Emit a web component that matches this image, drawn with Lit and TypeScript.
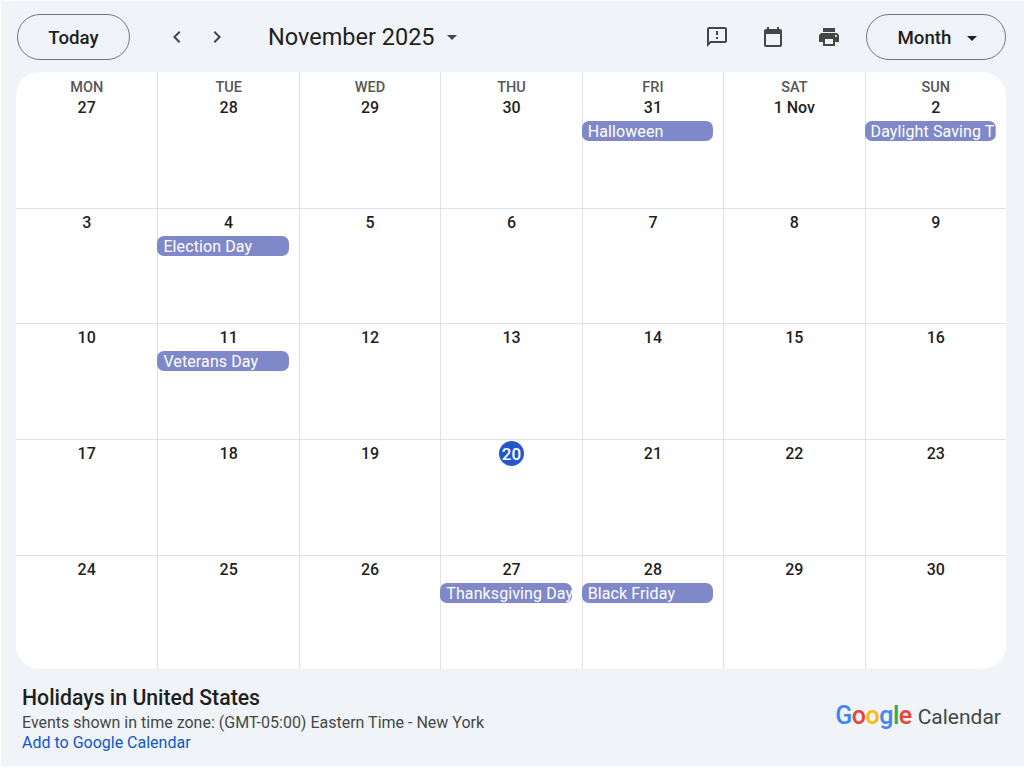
import { LitElement, html, css, svg } from 'lit';
import { customElement } from 'lit/decorators.js';

interface Day {
  label: string;
  event?: string;
  today?: boolean;
}

const WEEKDAYS = ['MON', 'TUE', 'WED', 'THU', 'FRI', 'SAT', 'SUN'];

const DAYS: Day[] = [
  { label: '27' }, { label: '28' }, { label: '29' }, { label: '30' },
  { label: '31', event: 'Halloween' }, { label: '1 Nov' }, { label: '2', event: 'Daylight Saving Time ends' },
  { label: '3' }, { label: '4', event: 'Election Day' }, { label: '5' }, { label: '6' },
  { label: '7' }, { label: '8' }, { label: '9' },
  { label: '10' }, { label: '11', event: 'Veterans Day' }, { label: '12' }, { label: '13' },
  { label: '14' }, { label: '15' }, { label: '16' },
  { label: '17' }, { label: '18' }, { label: '19' }, { label: '20', today: true },
  { label: '21' }, { label: '22' }, { label: '23' },
  { label: '24' }, { label: '25' }, { label: '26' }, { label: '27', event: 'Thanksgiving Day' },
  { label: '28', event: 'Black Friday' }, { label: '29' }, { label: '30' },
];

const ICONS = {
  left: 'M15.41 7.41L14 6l-6 6 6 6 1.41-1.41L10.83 12z',
  right: 'M10 6L8.59 7.41 13.17 12l-4.58 4.58L10 18l6-6z',
  caret: 'M7 10l5 5 5-5z',
  feedback: 'M20 2H4c-1.1 0-2 .9-2 2v18l4-4h14c1.1 0 2-.9 2-2V4c0-1.1-.9-2-2-2zm0 14H5.17L4 17.17V4h16v12zM11 12h2v2h-2zm0-6h2v4h-2z',
  calendar: 'M19 4h-1V2h-2v2H8V2H6v2H5c-1.1 0-2 .9-2 2v14c0 1.1.9 2 2 2h14c1.1 0 2-.9 2-2V6c0-1.1-.9-2-2-2zm0 16H5V9h14v11z',
  print: 'M19 8H5c-1.66 0-3 1.34-3 3v6h4v4h12v-4h4v-6c0-1.66-1.34-3-3-3zm-3 11H8v-5h8v5zm3-7c-.55 0-1-.45-1-1s.45-1 1-1 1 .45 1 1-.45 1-1 1zm-1-9H6v4h12V3z',
};

const icon = (d: string) => html`<svg viewBox="0 0 24 24" aria-hidden="true">${svg`<path d=${d}></path>`}</svg>`;

@customElement('app-root')
export class AppRoot extends LitElement {
  static styles = css`
    :host {
      display: block;
      width: 1024px;
      height: 770px;
      background: #fff;
      font-family: Roboto, 'Liberation Sans', sans-serif;
      color: #1f1f1f;
    }
    .panel {
      box-sizing: border-box;
      height: 765px;
      margin: 1px 0 0 1px;
      background: #f0f4f9;
      padding: 13px 18px 0 15px;
      display: flex;
      flex-direction: column;
    }
    .toolbar {
      display: flex;
      align-items: center;
      height: 46px;
      margin-bottom: 12px;
      padding-left: 1px;
    }
    .pill {
      box-sizing: border-box;
      height: 46px;
      border: 1px solid #747775;
      border-radius: 23px;
      display: flex;
      align-items: center;
      justify-content: center;
      padding-top: 1px;
      font-size: 18.7px;
      font-weight: 500;
    }
    .today { width: 113px; }
    .month { width: 140px; gap: 9px; padding-left: 10px; }
    .month svg { width: 24px; height: 24px; fill: #1f1f1f; }
    .nav {
      display: flex;
      gap: 16px;
      margin-left: 35px;
    }
    .nav svg, .tools svg, .caret { width: 24px; height: 24px; fill: #444746; display: block; }
    .title {
      margin-left: 39px;
      font-size: 23.5px;
      font-weight: 400;
    }
    .caret { margin-left: 5px; }
    .tools {
      margin-left: auto;
      margin-right: 25px;
      display: flex;
      gap: 32px;
    }
    .grid {
      box-sizing: border-box;
      height: 597px;
      background: #fff;
      border-radius: 24px;
      overflow: hidden;
      display: grid;
      grid-template-columns: repeat(7, 1fr);
      grid-template-rows: 136px 115px 116px 116px 1fr;
    }
    .cell {
      box-sizing: border-box;
      border-left: 1px solid #dde1ec;
      border-top: 1px solid #dde1ec;
      display: flex;
      flex-direction: column;
      align-items: center;
      padding-top: 3px;
      min-width: 0;
    }
    .cell.first-col { border-left: none; }
    .cell.first-row { border-top: none; padding-top: 7px; }
    .weekday {
      font-size: 14.5px;
      font-weight: 500;
      line-height: 18px;
      color: #555857;
    }
    .num {
      font-size: 16px;
      font-weight: 500;
      line-height: 20px;
      height: 20px;
      display: flex;
      align-items: center;
      justify-content: center;
      min-width: 25px;
      border-radius: 50%;
      margin-top: 1px;
    }
    .num.today {
      background: #2456cc;
      color: #fff;
      height: 25px;
      width: 25px;
      margin-top: -2px;
      margin-bottom: -2px;
      font-size: 17px;
    }
    .chip {
      box-sizing: border-box;
      align-self: flex-start;
      width: 131.5px;
      height: 20px;
      margin: 3px 0 0 -1px;
      padding-left: 6px;
      border-radius: 7px;
      background: #7f88c8;
      color: #fff;
      font-size: 16px;
      letter-spacing: 0.1px;
      line-height: 21px;
      white-space: nowrap;
      overflow: hidden;
    }
    .footer {
      display: flex;
      justify-content: space-between;
      align-items: center;
      padding: 17px 5px 0 6px;
    }
    .info h1 {
      margin: 0;
      font-size: 21.25px;
      font-weight: 500;
      line-height: 24px;
    }
    .info p {
      margin: 3px 0 0;
      font-size: 16px;
      line-height: 20px;
      color: #444746;
    }
    .info a {
      display: block;
      font-size: 16px;
      line-height: 20px;
      color: #0b57d0;
      text-decoration: none;
    }
    .logo {
      display: flex;
      align-items: baseline;
      font-size: 21px;
      color: #444746;
      margin-top: -8px;
    }
    .google {
      font-size: 25px;
      font-weight: 500;
      letter-spacing: -0.5px;
      margin-right: 6px;
    }
    .b { color: #4285f4; }
    .r { color: #ea4335; }
    .y { color: #fbbc05; }
    .g { color: #34a853; }
  `;

  private renderCell(day: Day, i: number) {
    const classes = ['cell', i % 7 === 0 ? 'first-col' : '', i < 7 ? 'first-row' : ''].join(' ');
    return html`<div class=${classes}>
      ${i < 7 ? html`<div class="weekday">${WEEKDAYS[i]}</div>` : ''}
      <div class="num ${day.today ? 'today' : ''}">${day.label}</div>
      ${day.event ? html`<div class="chip">${day.event}</div>` : ''}
    </div>`;
  }

  render() {
    return html`<div class="panel">
      <div class="toolbar">
        <div class="pill today">Today</div>
        <div class="nav">${icon(ICONS.left)}${icon(ICONS.right)}</div>
        <div class="title">November 2025</div>
        <div class="caret">${icon(ICONS.caret)}</div>
        <div class="tools">${icon(ICONS.feedback)}${icon(ICONS.calendar)}${icon(ICONS.print)}</div>
        <div class="pill month">Month ${icon(ICONS.caret)}</div>
      </div>
      <div class="grid">${DAYS.map((d, i) => this.renderCell(d, i))}</div>
      <div class="footer">
        <div class="info">
          <h1>Holidays in United States</h1>
          <p>Events shown in time zone: (GMT-05:00) Eastern Time - New York</p>
          <a href="#">Add to Google Calendar</a>
        </div>
        <div class="logo">
          <span class="google"><span class="b">G</span><span class="r">o</span><span class="y">o</span><span class="b">g</span><span class="g">l</span><span class="r">e</span></span>
          <span>Calendar</span>
        </div>
      </div>
    </div>`;
  }
}
